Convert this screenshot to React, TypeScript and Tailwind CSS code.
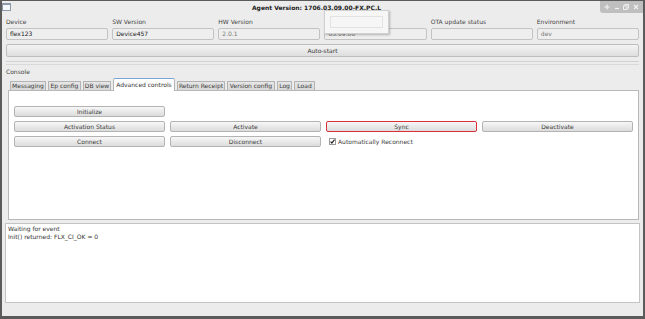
import React from "react";

const fields = [
  { label: "Device", value: "flex123", dark: true },
  { label: "SW Version", value: "Device457", dark: true },
  { label: "HW Version", value: "2.0.1", dark: false },
  { label: "FW Version", value: "03.09.00", dark: false },
  { label: "OTA update status", value: "", dark: false },
  { label: "Environment", value: "dev", dark: false },
];

const tabs = [
  { name: "Messaging", w: "w-[36px]" },
  { name: "Ep config", w: "w-[33px]" },
  { name: "DB view", w: "w-[28px]" },
  { name: "Advanced controls", w: "w-[62px]", active: true },
  { name: "Return Receipt", w: "w-[48px]" },
  { name: "Version config", w: "w-[48px]" },
  { name: "Log", w: "w-[15px]" },
  { name: "Load", w: "w-[21px]" },
];

const btn =
  "h-[11px] rounded-[2px] border bg-linear-to-b from-[#f7f7f7] to-[#dcdcdc] flex items-center justify-center leading-[9px] text-[#3a3a3a]";

function Btn({ label, red }: { label: string; red?: boolean }) {
  return (
    <div className={`${btn} ${red ? "border-[#dd2f37] border-[1.5px]" : "border-[#b3b3b3]"}`}>
      {label}
    </div>
  );
}

function WindowControls() {
  return (
    <div className="w-[43px] h-[12px] bg-[#bfbfbf] rounded-bl-[3px] flex items-center justify-around px-[2px]">
      <svg width="6" height="6" viewBox="0 0 6 6">
        <path d="M3 0.5V5.5M0.5 3H5.5" stroke="#f2f2f2" strokeWidth="1.2" />
      </svg>
      <svg width="6" height="6" viewBox="0 0 6 6">
        <path d="M1 4.5H5" stroke="#f2f2f2" strokeWidth="1.2" />
      </svg>
      <svg width="6" height="6" viewBox="0 0 6 6">
        <rect x="2" y="0.5" width="3.5" height="3.5" fill="none" stroke="#f2f2f2" strokeWidth="0.9" />
        <rect x="0.5" y="2" width="3.5" height="3.5" fill="#bfbfbf" stroke="#f2f2f2" strokeWidth="0.9" />
      </svg>
      <svg width="6" height="6" viewBox="0 0 6 6">
        <path d="M1 1L5 5M5 1L1 5" stroke="#f2f2f2" strokeWidth="1.2" />
      </svg>
    </div>
  );
}

export default function App() {
  return (
    <div className="relative w-[645px] h-[319px] overflow-hidden bg-[#ececec] border-t border-l-2 border-r-2 border-b-[3px] border-[#5b5b5b] font-['DejaVu_Sans',sans-serif] text-[6px] text-[#3a3a3a] flex flex-col">
      {/* title bar */}
      <div className="h-[13px] flex items-start shrink-0">
        <div className="mt-[2px] w-[9px] h-[8px] border border-[#8d99aa] border-t-2 bg-[#f4f7fb]" />
        <div className="flex-1 text-center font-bold leading-[13px] text-[#222] pl-[22px]">
          Agent Version: 1706.03.09.00-FX.PC.L
        </div>
        <WindowControls />
      </div>

      {/* fields */}
      <div className="px-[4px] shrink-0">
        <div className="grid grid-cols-6 gap-x-[4px] pt-[4px]">
          {fields.map((f) => (
            <div key={f.label} className="flex flex-col">
              <div className="leading-[8px] text-[#444]">{f.label}</div>
              <div
                className={`mt-[2px] h-[12px] rounded-[2px] border border-[#c3c3c3] bg-[#eeeeee] pl-[3px] leading-[10px] ${
                  f.dark ? "text-[#222]" : "text-[#777]"
                }`}
              >
                {f.value}
              </div>
            </div>
          ))}
        </div>
        <div className="mt-[4px] h-[13px] rounded-[2px] border border-[#bdbdbd] bg-linear-to-b from-[#f3f3f3] to-[#dedede] flex items-center justify-center leading-[11px]">
          Auto-start
        </div>
        <div className="mt-[4px] h-[4px] border-t border-b border-t-[#d2d2d2] border-b-[#d9d9d9]" />
        <div className="mt-[3px] leading-[8px] text-[#444]">Console</div>
      </div>

      {/* tabs */}
      <div className="ml-[6px] mr-[4px] mt-[2px] shrink-0">
        <div className="flex items-end gap-[2px] pl-[2px] h-[12px]">
          {tabs.map((t) =>
            t.active ? (
              <div
                key={t.name}
                className={`${t.w} relative z-10 h-[13px] -mb-px bg-white border border-[#b5b5b5] border-b-0 border-t-[#7aa6d6] rounded-t-[2px] flex items-center justify-center leading-[10px] text-[#333]`}
              >
                {t.name}
              </div>
            ) : (
              <div
                key={t.name}
                className={`${t.w} h-[9px] bg-linear-to-b from-[#e6e6e6] to-[#d8d8d8] border border-[#b3b3b3] border-b-0 rounded-t-[1px] flex items-center justify-center leading-[8px] text-[#3a3a3a]`}
              >
                {t.name}
              </div>
            )
          )}
        </div>
        <div className="h-[130px] bg-white border border-[#b8b8b8] pt-[15px] px-[5px]">
          <div className="grid grid-cols-4 gap-x-[5px] gap-y-[4px]">
            <Btn label="Initialize" />
            <div />
            <div />
            <div />
            <Btn label="Activation Status" />
            <Btn label="Activate" />
            <Btn label="Sync" red />
            <Btn label="Deactivate" />
            <Btn label="Connect" />
            <Btn label="Disconnect" />
            <div className="flex items-center gap-[2px] pl-[3px] h-[11px]">
              <svg width="7" height="7" viewBox="0 0 7 7">
                <rect x="0.5" y="0.5" width="6" height="6" fill="#fff" stroke="#9a9a9a" />
                <path d="M1.6 3.6L2.9 5L5.5 1.6" fill="none" stroke="#222" strokeWidth="1.2" />
              </svg>
              <span className="leading-[8px]">Automatically Reconnect</span>
            </div>
          </div>
        </div>
      </div>

      {/* log */}
      <div className="mx-[3px] mt-[3px] h-[80px] shrink-0 bg-white border border-[#c4c4c4] pl-[2px] pt-[1px] leading-[7.5px] text-[#333]">
        <div>Waiting for event</div>
        <div>Init() returned: FLX_CI_OK = 0</div>
      </div>
      <div className="flex-1" />

      {/* floating popup */}
      <div className="absolute left-[322px] top-[9px] w-[65px] h-[24px] bg-[#f6f6f6] border border-[#d0d0d0] shadow-[1px_1px_2px_rgba(0,0,0,0.25)] p-[5px]">
        <div className="h-full border border-[#e2e2e2]" />
      </div>
    </div>
  );
}
